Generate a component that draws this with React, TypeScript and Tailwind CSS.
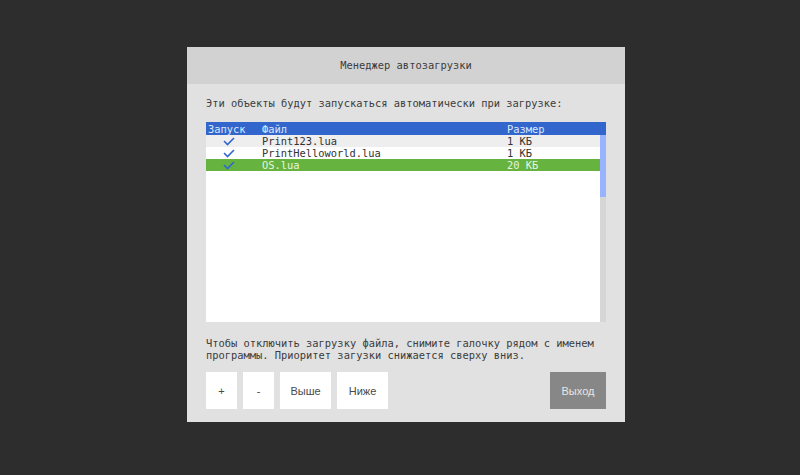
const mono = "font-['DejaVu_Sans_Mono','Liberation_Mono',monospace]";
const sans = "font-['Liberation_Sans','Arial',sans-serif]";

type Item = { name: string; size: string };

const items: Item[] = [
  { name: "Print123.lua", size: "1 КБ" },
  { name: "PrintHelloworld.lua", size: "1 КБ" },
  { name: "OS.lua", size: "20 КБ" },
];

function Check() {
  return (
    <svg width="12" height="9" viewBox="0 0 12 9" className="block">
      <path d="M1 4 L4.5 7.5 L11 1" fill="none" stroke="#3366cc" strokeWidth="1.6" />
    </svg>
  );
}

function Row({ item, index }: { item: Item; index: number }) {
  const selected = index === items.length - 1;
  const bg = selected
    ? "bg-[#66b33f] text-[#e8f5e0]"
    : index % 2 === 0
      ? "bg-[#eeeeee] text-[#333333]"
      : "bg-white text-[#333333]";
  return (
    <div className={`flex h-[12px] items-center ${bg}`}>
      <div className="w-[56px] pl-[17px]">
        <Check />
      </div>
      <div className="w-[245px]">{item.name}</div>
      <div className="flex-1">{item.size}</div>
    </div>
  );
}

export default function App() {
  return (
    <div className={`h-[475px] w-[800px] bg-[#2d2d2d] pl-[187px] pt-[47px] ${mono}`}>
      <div className="flex h-[375px] w-[438px] flex-col bg-[#e1e1e1]">
        <div className="flex h-[37px] items-center justify-center bg-[#d2d2d2] text-[10.4px] text-[#3c3c3c]">
          Менеджер автозагрузки
        </div>

        <div className="flex flex-1 flex-col px-[19px] text-[10.4px] leading-[12px] text-[#3c3c3c]">
          <div className="pt-[13px]">Эти объекты будут запускаться автоматически при загрузке:</div>

          <div className="mt-[13px] flex h-[200px] w-[400px] flex-col bg-white">
            <div className="flex h-[13px] items-center bg-[#3366cc] text-[#dce6fa]">
              <div className="w-[56px] pl-[2px]">Запуск</div>
              <div className="w-[245px]">Файл</div>
              <div className="flex-1">Размер</div>
            </div>
            <div className="flex flex-1">
              <div className="flex-1">
                {items.map((item, i) => (
                  <Row key={item.name} item={item} index={i} />
                ))}
              </div>
              <div className="flex w-[6px] flex-col bg-[#d6d6d6]">
                <div className="h-[62px] bg-[#99b4ff]" />
              </div>
            </div>
          </div>

          <div className="mt-[15px]">
            Чтобы отключить загрузку файла, снимите галочку рядом с именем
            <br />
            программы. Приоритет загузки снижается сверху вниз.
          </div>

          <div className={`mt-[11px] flex h-[37px] gap-[6px] text-[11px] text-[#4a4a4a] ${sans}`}>
            <button className="w-[31px] bg-white">+</button>
            <button className="w-[31px] bg-white">-</button>
            <button className="w-[51px] bg-white">Выше</button>
            <button className="w-[51px] bg-white">Ниже</button>
            <div className="flex-1" />
            <button className="w-[56px] bg-[#878787] text-[#e6e6e6]">Выход</button>
          </div>
        </div>
      </div>
    </div>
  );
}
